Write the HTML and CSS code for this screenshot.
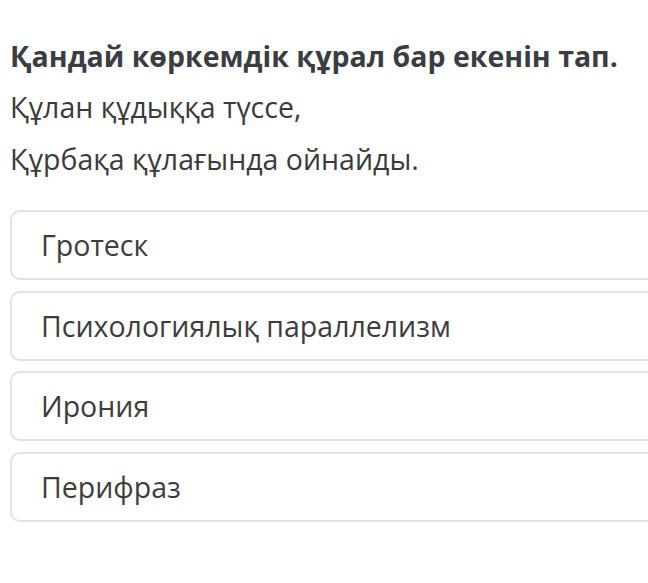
FILE: index.html
```html
<!DOCTYPE html>
<html lang="kk">
<head>
  <meta charset="UTF-8">
  <meta name="viewport" content="width=device-width, initial-scale=1">
  <title>Сұрақ</title>
  <link rel="stylesheet" href="styles.css">
</head>
<body>

<!-- Сұрақ -->
<div class="question">
  <h2>Қандай көркемдік құрал бар екенін тап.</h2>
  <p>Құлан құдыққа түссе,</p>
  <p>Құрбақа құлағында ойнайды.</p>
</div>

<!-- Жауаптар -->
<div class="answers">
  <div class="answer">Гротеск</div>
  <div class="answer">Психологиялық параллелизм</div>
  <div class="answer">Ирония</div>
  <div class="answer">Перифраз</div>
</div>

</body>
</html>
```

FILE: styles.css
```css
body {
  font-family: "Open Sans", Arial, sans-serif;
  background: #ffffff;
  color: #3b3b3b;
  margin: 0;
  padding: 36px 0 0 10px;
  overflow: hidden;
}
.question h2 {
  font-size: 28.5px;
  font-weight: bold;
  color: #3a3d42;
  margin: 0 0 5px 0;
  line-height: 40px;
}
.question p {
  font-size: 28.5px;
  margin: 0;
  line-height: 52px;
}
.answers {
  margin-top: 25px;
  width: 660px;
  display: flex;
  flex-direction: column;
  gap: 10.5px;
}
.answer {
  box-sizing: border-box;
  border: 2px solid #e2e2e2;
  border-radius: 10px;
  height: 70px;
  padding-left: 29px;
  display: flex;
  align-items: center;
  font-size: 28.5px;
  color: #3d3d3d;
}
```
